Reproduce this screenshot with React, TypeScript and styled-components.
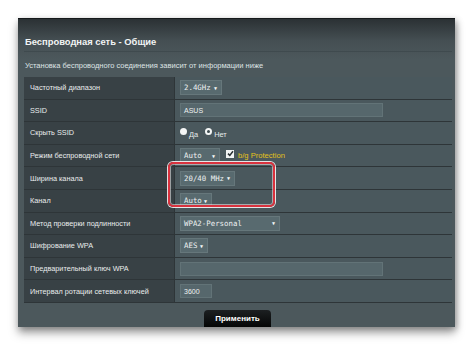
import React from 'react';
import styled, { createGlobalStyle } from 'styled-components';

const GlobalStyle = createGlobalStyle`
  html, body {
    margin: 0;
    background: #ffffff;
    font-family: "Liberation Sans", Arial, sans-serif;
  }
`;

const Page = styled.div`
  width: 474px;
  height: 346px;
  padding: 18px 0 0 18px;
  box-sizing: border-box;
`;

const Panel = styled.div`
  width: 437px;
  height: 309px;
  box-sizing: border-box;
  border-top: 1px solid #15191b;
  background: linear-gradient(to bottom, #2b3134 0px, #454f53 22px, #4c585c 40px, #4c585c 100%);
  box-shadow: 0 6px 9px rgba(0, 0, 0, 0.35), 2px 2px 6px rgba(0, 0, 0, 0.25);
  display: flex;
  flex-direction: column;
`;

const Title = styled.div`
  height: 33px;
  margin: 0 3px 0 6px;
  padding: 17px 0 0 1px;
  box-sizing: border-box;
  color: #f2f4f4;
  font-size: 9.4px;
  font-weight: bold;
  border-bottom: 1px solid #3f4a4e;
`;

const Subtitle = styled.div`
  height: 25px;
  padding: 9px 0 0 7px;
  box-sizing: border-box;
  color: #dfe4e5;
  font-size: 7.5px;
`;

const Table = styled.div`
  margin: 0 3px 0 6px;
  display: flex;
  flex-direction: column;
`;

const Row = styled.div`
  display: grid;
  grid-template-columns: 151px 1fr;
  height: 22.6px;
  box-sizing: border-box;
  border-bottom: 1px solid #2e3538;
`;

const Label = styled.div`
  background: #384145;
  border-right: 1px solid #2e3538;
  color: #e8ecec;
  font-size: 7.3px;
  display: flex;
  align-items: center;
  padding-left: 6px;
`;

const Value = styled.div`
  position: relative;
  background: #4a585d;
  display: flex;
  align-items: center;
  gap: 4px;
  padding-left: 5px;
`;

const Select = styled.div<{ $w: number }>`
  width: ${(p) => p.$w}px;
  height: 15px;
  box-sizing: border-box;
  background: #586a6f;
  border: 1px solid #66777b;
  display: flex;
  align-items: center;
  justify-content: space-between;
  padding: 0 4px 0 3px;
  color: #eef1f1;
  font-family: "DejaVu Sans Mono", "Liberation Mono", monospace;
  font-size: 7.4px;
`;

const Arrow = styled.span`
  font-size: 5px;
  color: #f4f6f6;
`;

const TextInput = styled.div<{ $w: number }>`
  width: ${(p) => p.$w}px;
  height: 14px;
  box-sizing: border-box;
  background: #56676c;
  border: 1px solid #627377;
  display: flex;
  align-items: center;
  padding-left: 3px;
  color: #eef1f1;
  font-size: 7px;
`;

const RadioGroup = styled.div`
  display: flex;
  align-items: center;
  gap: 2px;
  color: #e8ecec;
  font-size: 7.4px;
`;

const Radio = styled.span<{ $on?: boolean }>`
  width: 7px;
  height: 7px;
  border-radius: 50%;
  box-sizing: border-box;
  background: ${(p) => (p.$on ? '#f4f6f6' : '#3d4a4e')};
  border: ${(p) => (p.$on ? 'none' : '2px solid #f4f6f6')};
  margin-top: -3px;
`;

const RadioText = styled.span`
  margin-right: 5px;
  margin-top: 3px;
`;

const Check = styled.span`
  width: 8px;
  height: 8px;
  background: #f2f4f4;
  display: flex;
  align-items: center;
  justify-content: center;
  margin-top: -4px;
  margin-left: 2px;
`;

const Protection = styled.span`
  color: #e4c21a;
  font-size: 7.6px;
`;

const Highlight = styled.div`
  position: absolute;
  z-index: 2;
  left: -7px;
  top: -5px;
  width: 107px;
  height: 45px;
  box-sizing: border-box;
  border: 2px solid #d9323e;
  border-radius: 5px;
  box-shadow: 0 0 0 1px rgba(255, 255, 255, 0.85), inset 0 0 0 1px rgba(255, 255, 255, 0.5);
  pointer-events: none;
`;

const Footer = styled.div`
  flex: 1;
  display: flex;
  justify-content: center;
  align-items: flex-end;
`;

const ApplyButton = styled.button`
  width: 67px;
  height: 17px;
  margin-left: 2px;
  border: none;
  border-radius: 4px 4px 0 0;
  background: linear-gradient(to bottom, #1c1f21, #050606);
  color: #ffffff;
  font-family: "Liberation Sans", Arial, sans-serif;
  font-weight: bold;
  font-size: 8px;
  padding: 0;
`;

const ArrowDown = () => <Arrow>▼</Arrow>;

export default function App() {
  return (
    <>
      <GlobalStyle />
      <Page>
        <Panel>
          <Title>Беспроводная сеть - Общие</Title>
          <Subtitle>Установка беспроводного соединения зависит от информации ниже</Subtitle>
          <Table>
            <Row>
              <Label>Частотный диапазон</Label>
              <Value>
                <Select $w={42}>2.4GHz<ArrowDown /></Select>
              </Value>
            </Row>
            <Row>
              <Label>SSID</Label>
              <Value>
                <TextInput $w={203}>ASUS</TextInput>
              </Value>
            </Row>
            <Row>
              <Label>Скрыть SSID</Label>
              <Value>
                <RadioGroup>
                  <Radio $on />
                  <RadioText>Да</RadioText>
                  <Radio />
                  <RadioText>Нет</RadioText>
                </RadioGroup>
              </Value>
            </Row>
            <Row>
              <Label>Режим беспроводной сети</Label>
              <Value>
                <Select $w={40}>Auto<ArrowDown /></Select>
                <Check>
                  <svg width="7" height="7" viewBox="0 0 7 7">
                    <path d="M1 3.6 L2.8 5.4 L6 1.2" stroke="#2a3134" strokeWidth="1.5" fill="none" />
                  </svg>
                </Check>
                <Protection>b/g Protection</Protection>
              </Value>
            </Row>
            <Row>
              <Label>Ширина канала</Label>
              <Value>
                <Select $w={55}>20/40 MHz<ArrowDown /></Select>
                <Highlight />
              </Value>
            </Row>
            <Row>
              <Label>Канал</Label>
              <Value>
                <Select $w={32}>Auto<ArrowDown /></Select>
              </Value>
            </Row>
            <Row>
              <Label>Метод проверки подлинности</Label>
              <Value>
                <Select $w={100}>WPA2-Personal<ArrowDown /></Select>
              </Value>
            </Row>
            <Row>
              <Label>Шифрование WPA</Label>
              <Value>
                <Select $w={28}>AES<ArrowDown /></Select>
              </Value>
            </Row>
            <Row>
              <Label>Предварительный ключ WPA</Label>
              <Value>
                <TextInput $w={203} />
              </Value>
            </Row>
            <Row>
              <Label>Интервал ротации сетевых ключей</Label>
              <Value>
                <TextInput $w={32}>3600</TextInput>
              </Value>
            </Row>
          </Table>
          <Footer>
            <ApplyButton>Применить</ApplyButton>
          </Footer>
        </Panel>
      </Page>
    </>
  );
}
